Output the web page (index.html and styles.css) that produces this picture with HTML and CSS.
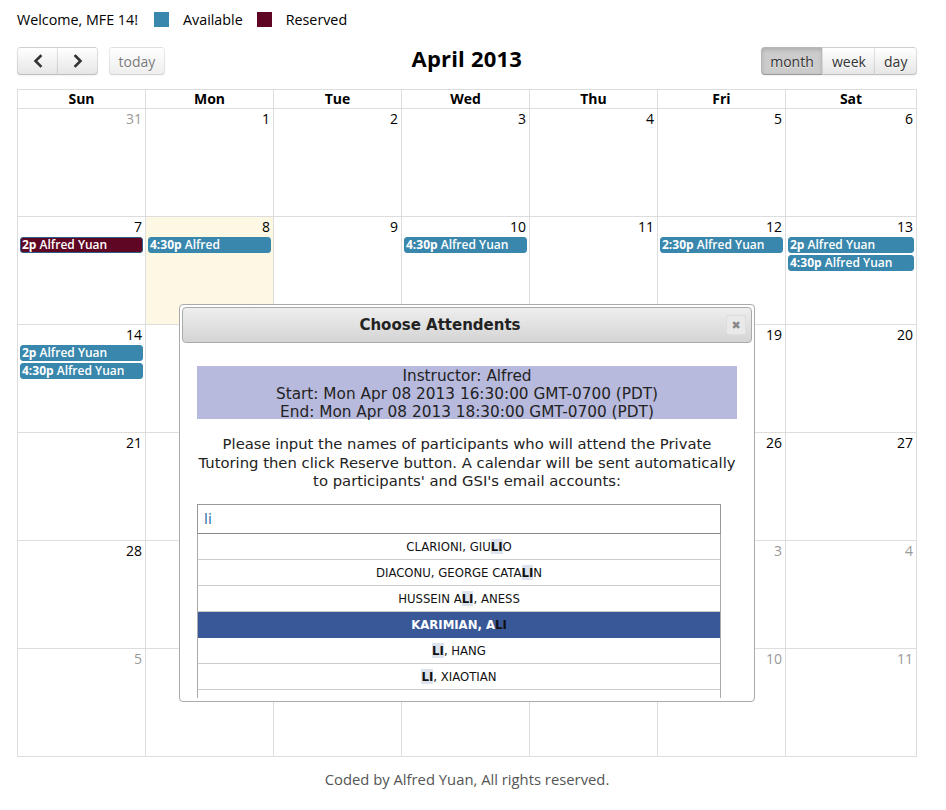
FILE: index.html
```html
<!DOCTYPE html>
<html>
<head>
<meta charset="utf-8">
<title>Calendar</title>
<link rel="stylesheet" href="styles.css">
</head>
<body>
<div class="page">
  <div class="legend">
    <span class="welcome">Welcome, MFE 14!</span>
    <span class="swatch sw-avail"></span><span class="legend-label">Available</span>
    <span class="swatch sw-res"></span><span class="legend-label">Reserved</span>
  </div>

  <div class="toolbar">
    <div class="tb-left">
      <div class="btn-group">
        <button class="btn btn-icon first"><svg width="12" height="14" viewBox="0 0 12 14"><path d="M8.5 2 L3.5 7 L8.5 12" fill="none" stroke="#333" stroke-width="2.6" stroke-linecap="square"/></svg></button>
        <button class="btn btn-icon last"><svg width="12" height="14" viewBox="0 0 12 14"><path d="M3.5 2 L8.5 7 L3.5 12" fill="none" stroke="#333" stroke-width="2.6" stroke-linecap="square"/></svg></button>
      </div>
      <button class="btn single disabled">today</button>
    </div>
    <h2 class="title">April 2013</h2>
    <div class="btn-group">
      <button class="btn first active">month</button>
      <button class="btn">week</button>
      <button class="btn last">day</button>
    </div>
  </div>

  <div class="month">
    <div class="hd">Sun</div><div class="hd">Mon</div><div class="hd">Tue</div><div class="hd">Wed</div><div class="hd">Thu</div><div class="hd">Fri</div><div class="hd">Sat</div>

    <div class="day other"><div class="num">31</div></div>
    <div class="day"><div class="num">1</div></div>
    <div class="day"><div class="num">2</div></div>
    <div class="day"><div class="num">3</div></div>
    <div class="day"><div class="num">4</div></div>
    <div class="day"><div class="num">5</div></div>
    <div class="day"><div class="num">6</div></div>

    <div class="day"><div class="num">7</div><div class="ev reserved"><b>2p</b> Alfred Yuan</div></div>
    <div class="day today"><div class="num">8</div><div class="ev"><b>4:30p</b> Alfred</div></div>
    <div class="day"><div class="num">9</div></div>
    <div class="day"><div class="num">10</div><div class="ev"><b>4:30p</b> Alfred Yuan</div></div>
    <div class="day"><div class="num">11</div></div>
    <div class="day"><div class="num">12</div><div class="ev"><b>2:30p</b> Alfred Yuan</div></div>
    <div class="day"><div class="num">13</div><div class="ev"><b>2p</b> Alfred Yuan</div><div class="ev"><b>4:30p</b> Alfred Yuan</div></div>

    <div class="day"><div class="num">14</div><div class="ev"><b>2p</b> Alfred Yuan</div><div class="ev"><b>4:30p</b> Alfred Yuan</div></div>
    <div class="day"><div class="num"></div></div>
    <div class="day"><div class="num"></div></div>
    <div class="day"><div class="num"></div></div>
    <div class="day"><div class="num"></div></div>
    <div class="day"><div class="num">19</div></div>
    <div class="day"><div class="num">20</div></div>

    <div class="day"><div class="num">21</div></div>
    <div class="day"><div class="num"></div></div>
    <div class="day"><div class="num"></div></div>
    <div class="day"><div class="num"></div></div>
    <div class="day"><div class="num"></div></div>
    <div class="day"><div class="num">26</div></div>
    <div class="day"><div class="num">27</div></div>

    <div class="day"><div class="num">28</div></div>
    <div class="day"><div class="num"></div></div>
    <div class="day"><div class="num"></div></div>
    <div class="day other"><div class="num"></div></div>
    <div class="day other"><div class="num"></div></div>
    <div class="day other"><div class="num">3</div></div>
    <div class="day other"><div class="num">4</div></div>

    <div class="day other"><div class="num">5</div></div>
    <div class="day other"><div class="num"></div></div>
    <div class="day other"><div class="num"></div></div>
    <div class="day other"><div class="num"></div></div>
    <div class="day other"><div class="num"></div></div>
    <div class="day other"><div class="num">10</div></div>
    <div class="day other"><div class="num">11</div></div>
  </div>

  <div class="footer">Coded by Alfred Yuan, All rights reserved.</div>
</div>

<div class="dialog">
  <div class="dlg-title">
    <span class="dlg-text">Choose Attendents</span>
    <span class="dlg-close">&#x2716;</span>
  </div>
  <div class="dlg-body">
    <div class="info">
      Instructor: Alfred<br>
      Start: Mon Apr 08 2013 16:30:00 GMT-0700 (PDT)<br>
      End: Mon Apr 08 2013 18:30:00 GMT-0700 (PDT)
    </div>
    <p class="msg">Please input the names of participants who will attend the Private<br>Tutoring then click Reserve button. A calendar will be sent automatically<br>to participants' and GSI's email accounts:</p>
    <div class="search">li</div>
    <div class="results">
      <div class="item">CLARIONI, GIU<span class="hl">LI</span>O</div>
      <div class="item">DIACONU, GEORGE CATA<span class="hl">LI</span>N</div>
      <div class="item">HUSSEIN A<span class="hl">LI</span>, ANESS</div>
      <div class="item selected">KARIMIAN, A<span class="hl">LI</span></div>
      <div class="item"><span class="hl">LI</span>, HANG</div>
      <div class="item"><span class="hl">LI</span>, XIAOTIAN</div>
    </div>
  </div>
</div>
</body>
</html>
```

FILE: styles.css
```css
* { box-sizing: border-box; }
html, body { margin: 0; padding: 0; background: #fff; }
body { font-family: "Open Sans", "DejaVu Sans", sans-serif; color: #000; }

.page { width: 900px; margin-left: 17px; }

.legend { display: flex; align-items: center; height: 18px; margin-top: 10px; font-size: 14.3px; }
.welcome { margin-right: 16px; }
.swatch { width: 15px; height: 15px; display: inline-block; margin-right: 14px; }
.sw-avail { background: #3a87ad; }
.sw-res { background: #600625; }
.legend-label { margin-right: 14px; }

.toolbar { display: flex; align-items: center; justify-content: space-between; margin-top: 19px; height: 28px; margin-bottom: 14px; }
.tb-left { display: flex; gap: 11px; width: 148px; }
.title { margin: 0; font-size: 22px; font-weight: 700; letter-spacing: 0.2px; position: relative; left: 4px; top: -3px; }
.btn-group { display: flex; }
.btn {
  height: 28px; padding: 0 8.6px; font-family: inherit; font-size: 14px; color: #333; margin: 0;
  background-color: #f5f5f5; background-image: linear-gradient(to bottom, #fff, #e6e6e6);
  border: 1px solid rgba(0,0,0,.1); border-bottom-color: rgba(0,0,0,.25); border-radius: 0;
  text-shadow: 0 1px 1px rgba(255,255,255,.75);
  box-shadow: inset 0 1px 0 rgba(255,255,255,.2), 0 1px 2px rgba(0,0,0,.05);
  display: flex; align-items: center; justify-content: center;
}
.btn + .btn { margin-left: -1px; }
.btn.first { border-radius: 4px 0 0 4px; }
.btn.last { border-radius: 0 4px 4px 0; }
.btn.single { border-radius: 4px; }
.btn-icon { width: 41px; }
.btn.disabled { opacity: .65; width: 57px; }
.btn.active { background-color: #ccc; background-image: none; box-shadow: inset 0 2px 4px rgba(0,0,0,.15), 0 1px 2px rgba(0,0,0,.05); }

.month { display: grid; grid-template-columns: repeat(6, 128px) 1fr; border-left: 1px solid #ddd; border-top: 1px solid #ddd; }
.hd { border-right: 1px solid #ddd; border-bottom: 1px solid #ddd; text-align: center; font-weight: 700; font-size: 14px; height: 19px; line-height: 18px; }
.day { border-right: 1px solid #ddd; border-bottom: 1px solid #ddd; height: 108px; padding-top: 1px; }
.day.today { background: #fcf8e3; }
.num { text-align: right; padding-right: 3px; font-size: 14px; line-height: 18px; height: 19px; }
.other .num { color: #999; }
.ev { margin: 0 2px 2px; height: 16px; line-height: 14px; border: 1px solid #3a87ad; background: #3a87ad; color: #fff; border-radius: 3px; font-size: 12px; font-weight: 600; padding-left: 1px; white-space: nowrap; overflow: hidden; }
.ev b { font-weight: 700; }
.ev.reserved { background: #600625; border-color: #2c5f86; }

.footer { text-align: center; font-size: 14.8px; color: #555; margin-top: 12px; }

.dialog { position: absolute; left: 179px; top: 304px; width: 576px; height: 398px; background: #fff; border: 1px solid #aaa; border-radius: 4px; padding: 2px; font-family: "DejaVu Sans", sans-serif; color: #222; }
.dlg-title { position: relative; height: 36px; border: 1px solid #aaa; border-radius: 4px; background: linear-gradient(to bottom, #eeeeee, #d4d4d4); display: flex; align-items: center; font-weight: 700; font-size: 15px; }
.dlg-text { margin-left: 16px; width: 482px; text-align: center; }
.dlg-close { position: absolute; right: 5px; top: 7px; width: 20px; height: 20px; background: #e9e9e9; border: 1px solid #ddd; border-radius: 2px; color: #888; font-size: 11px; display: flex; align-items: center; justify-content: center; font-weight: 400; }
.dlg-body { height: 355px; overflow: hidden; padding: 23px 15px 0; }
.info { background: #b8badd; text-align: center; font-size: 15.3px; line-height: 18px; height: 53px; padding-top: 1px; }
.msg { margin: 16px -8px 0; text-align: center; font-size: 14.8px; line-height: 18.5px; white-space: nowrap; }
.search { margin-top: 13px; width: 524px; height: 30px; border: 1px solid #999; border-bottom-color: #888; padding-left: 6px; line-height: 28px; font-size: 14px; color: #2b6ca3; }
.results { width: 524px; height: 165px; overflow: hidden; border-left: 1px solid #aaa; border-right: 1px solid #aaa; }
.item { height: 26px; border-bottom: 1px solid #ccc; text-align: center; font-family: "DejaVu Sans Condensed", "DejaVu Sans", sans-serif; font-size: 13px; line-height: 26px; color: #111; }
.hl { background: #dde3ec; font-weight: 700; }
.item.selected { background: #385898; color: #fff; font-weight: 700; border-bottom-color: #385898; }
.item.selected .hl { background: transparent; color: #111; }
```
